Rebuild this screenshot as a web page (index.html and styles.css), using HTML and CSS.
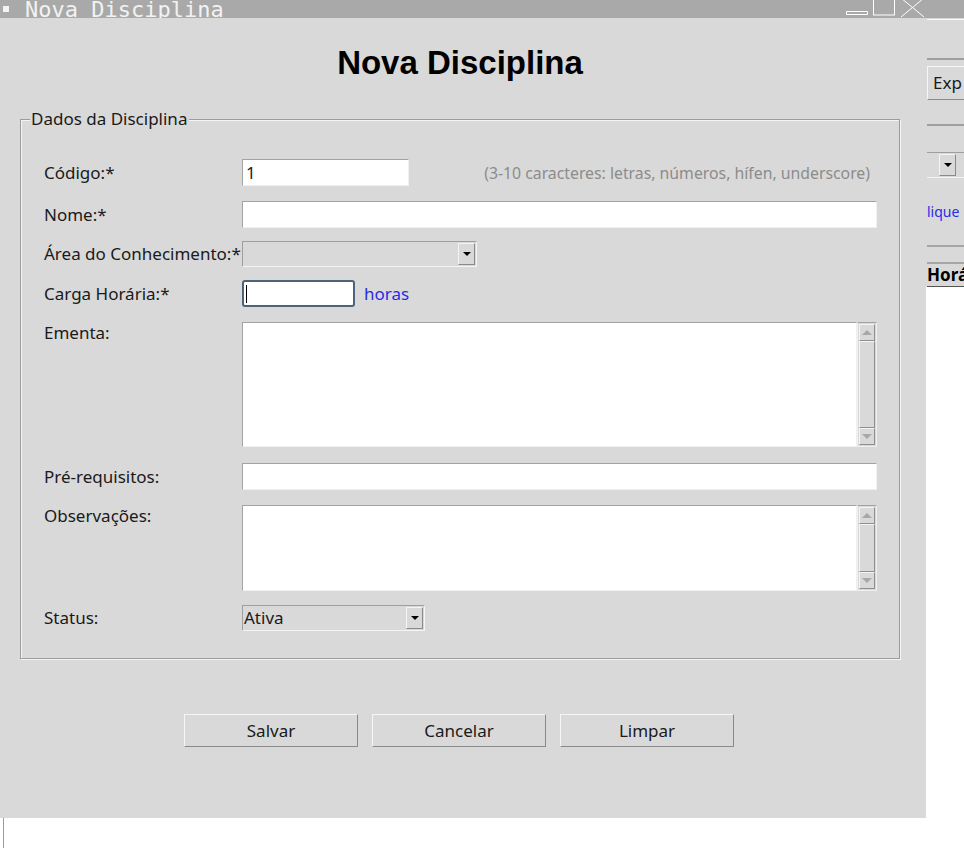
FILE: index.html
```html
<!DOCTYPE html>
<html lang="pt">
<head>
<meta charset="utf-8">
<title>Nova Disciplina</title>
<link rel="stylesheet" href="styles.css">
</head>
<body>
<div class="screen">
  <div class="titlebar">
    <span class="tb-icon"></span>
    <span class="tb-title">Nova Disciplina</span>
    <span class="tb-controls">
      <svg width="80" height="18" viewBox="0 0 80 18">
        <path d="M0.5 14.5h21v-3h-21z" fill="none" stroke="#fff" stroke-width="1"/>
        <rect x="27.5" y="-2" width="21" height="17" fill="none" stroke="#fff"/>
        <path d="M55 -2L78 17M78 -2L55 17" stroke="#fff" stroke-width="1"/>
      </svg>
    </span>
  </div>
  <div class="desk">
    <div class="win">
      <h1 class="heading">Nova Disciplina</h1>
      <div class="group">
        <div class="legend">Dados da Disciplina</div>
        <div class="rows">
          <div class="row">
            <label class="lbl">Código:*</label>
            <div class="entry w-cod">1</div>
            <span class="hint">(3-10 caracteres: letras, números, hífen, underscore)</span>
          </div>
          <div class="row sp15">
            <label class="lbl">Nome:*</label>
            <div class="entry w-full"></div>
          </div>
          <div class="row sp13">
            <label class="lbl">Área do Conhecimento:*</label>
            <div class="combo w-area"><span class="combo-val"></span><span class="arrow"><span class="tri"></span></span></div>
          </div>
          <div class="row sp13">
            <label class="lbl">Carga Horária:*</label>
            <div class="entry focus w-carga"><span class="caret"></span></div>
            <span class="unit">horas</span>
          </div>
          <div class="row top sp15">
            <label class="lbl lbl-top">Ementa:</label>
            <div class="textbox h-ementa">
              <div class="text-area"></div>
              <div class="sbar"><span class="sbtn"><span class="stri up"></span></span><span class="strough"><span class="thumb"></span></span><span class="sbtn"><span class="stri down"></span></span></div>
            </div>
          </div>
          <div class="row sp16">
            <label class="lbl">Pré-requisitos:</label>
            <div class="entry w-full"></div>
          </div>
          <div class="row top sp15">
            <label class="lbl lbl-top">Observações:</label>
            <div class="textbox h-obs">
              <div class="text-area"></div>
              <div class="sbar"><span class="sbtn"><span class="stri up"></span></span><span class="strough"><span class="thumb"></span></span><span class="sbtn"><span class="stri down"></span></span></div>
            </div>
          </div>
          <div class="row sp14">
            <label class="lbl">Status:</label>
            <div class="combo w-status"><span class="combo-val">Ativa</span><span class="arrow"><span class="tri"></span></span></div>
          </div>
        </div>
      </div>
      <div class="buttons">
        <button class="btn">Salvar</button>
        <button class="btn">Cancelar</button>
        <button class="btn">Limpar</button>
      </div>
    </div>
    <div class="back">
      <div class="bk-top"></div>
      <div class="bk-sep"></div>
      <div class="bk-btn">Exp</div>
      <div class="bk-sep2"></div>
      <div class="bk-combo"><span class="bk-cval"></span><span class="arrow"><span class="tri"></span></span></div>
      <div class="bk-link">lique</div>
      <div class="bk-sep3"></div>
      <div class="bk-head">Horá</div>
      <div class="bk-white"></div>
    </div>
  </div>
  <div class="below"><span class="below-line"></span></div>
</div>
</body>
</html>
```
FILE: styles.css
```css
html, body {
  margin: 0;
  padding: 0;
  background: #ffffff;
}
.screen {
  width: 964px;
  height: 848px;
  overflow: hidden;
  font-family: "Noto Sans", sans-serif;
  font-size: 17px;
  color: #1a1a1a;
}
.titlebar {
  height: 18px;
  background: #a9a9a9;
  display: flex;
  align-items: flex-end;
  position: relative;
  overflow: hidden;
}
.tb-icon {
  width: 6px;
  height: 6px;
  background: #f4f4f4;
  margin: 0 0 6px 3px;
  flex: none;
}
.tb-title {
  font-family: "DejaVu Sans Mono", monospace;
  font-size: 22px;
  line-height: 22px;
  color: #f2f2f2;
  margin-left: 16px;
  transform: translateY(3px);
}
.tb-controls {
  margin-left: auto;
  margin-right: 39px;
  height: 18px;
}
.tb-controls svg { display: block; transform: translateX(1px); }

.desk {
  display: flex;
  height: 800px;
}
.win {
  width: 926px;
  flex: none;
  background: #d9d9d9;
  display: flex;
  flex-direction: column;
}
.heading {
  margin: 0;
  padding-top: 26px;
  height: 74px;
  box-sizing: border-box;
  text-align: center;
  font-family: "Liberation Sans", Arial, sans-serif;
  font-weight: bold;
  font-size: 33px;
  line-height: 38px;
  color: #000;
  padding-right: 6px;
}
.group {
  margin: 27px 26px 0 20px;
  border: 1px solid #9c9c9c;
  box-shadow: inset 1px 1px 0 #f4f4f4, 1px 1px 0 #f4f4f4;
  height: 540px;
  box-sizing: border-box;
  position: relative;
  padding: 39px 21px 0 23px;
}
.legend {
  position: absolute;
  top: -12px;
  left: 9px;
  background: #d9d9d9;
  padding: 0 2px 0 1px;
  font-size: 17px;
  line-height: 22px;
  color: #1a1a1a;
}
.rows {
  display: flex;
  flex-direction: column;
}
.row {
  display: flex;
  align-items: center;
}
.row.top { align-items: flex-start; }
.sp13 { margin-top: 13px; }
.sp14 { margin-top: 14px; }
.sp15 { margin-top: 15px; }
.sp16 { margin-top: 16px; }
.lbl {
  width: 198px;
  flex: none;
  font-size: 17px;
  line-height: 22px;
  white-space: nowrap;
  overflow: visible;
}
.lbl-top { padding-top: 0; }

.entry {
  height: 27px;
  box-sizing: border-box;
  background: #fff;
  border-top: 1px solid #a3a3a3;
  border-left: 1px solid #a3a3a3;
  border-right: 1px solid #f0f0f0;
  border-bottom: 1px solid #f0f0f0;
  font-size: 17px;
  line-height: 25px;
  padding-left: 3px;
  flex: none;
}
.w-cod { width: 167px; }
.w-full { width: 635px; }
.w-carga { width: 113px; }
.entry.focus {
  border: 2px solid #4f6378;
  border-radius: 3px;
  padding-left: 2px;
  display: flex;
  align-items: center;
}
.caret {
  width: 1px;
  height: 18px;
  background: #000;
}
.hint {
  margin-left: auto;
  margin-right: 8px;
  color: #8c8c8c;
  font-size: 15.8px;
}
.unit {
  margin-left: 9px;
  color: #2a2ae8;
  font-size: 17px;
}
.combo {
  height: 26px;
  box-sizing: border-box;
  display: flex;
  align-items: stretch;
  background: #d9d9d9;
  border-top: 1px solid #9f9f9f;
  border-left: 1px solid #9f9f9f;
  border-right: 1px solid #f4f4f4;
  border-bottom: 1px solid #f4f4f4;
  flex: none;
}
.w-area { width: 235px; }
.w-status { width: 183px; }
.combo-val {
  flex: 1;
  font-size: 17px;
  line-height: 24px;
  padding-left: 1px;
}
.arrow {
  width: 17px;
  margin: 1px 1px 1px 0;
  box-sizing: border-box;
  border-top: 1px solid #f4f4f4;
  border-left: 1px solid #f4f4f4;
  border-right: 1px solid #8a8a8a;
  border-bottom: 1px solid #8a8a8a;
  display: flex;
  align-items: center;
  justify-content: center;
  background: #d9d9d9;
}
.tri {
  width: 0;
  height: 0;
  border-left: 4px solid transparent;
  border-right: 4px solid transparent;
  border-top: 4px solid #000;
}
.textbox {
  display: flex;
  width: 635px;
}
.h-ementa { height: 125px; }
.h-obs { height: 86px; }
.text-area {
  width: 615px;
  background: #fff;
  box-sizing: border-box;
  border-top: 1px solid #a3a3a3;
  border-left: 1px solid #a3a3a3;
  border-right: 1px solid #f0f0f0;
  border-bottom: 1px solid #f0f0f0;
}
.sbar {
  width: 20px;
  box-sizing: border-box;
  background: #d9d9d9;
  border: 1px solid #f0f0f0;
  border-top-color: #a3a3a3;
  display: flex;
  flex-direction: column;
  padding: 1px;
}
.sbtn {
  height: 17px;
  flex: none;
  box-sizing: border-box;
  border-top: 1px solid #f4f4f4;
  border-left: 1px solid #f4f4f4;
  border-right: 1px solid #8f8f8f;
  border-bottom: 1px solid #8f8f8f;
  display: flex;
  align-items: center;
  justify-content: center;
}
.strough {
  flex: 1;
  display: flex;
}
.thumb {
  flex: 1;
  box-sizing: border-box;
  border-top: 1px solid #f4f4f4;
  border-left: 1px solid #f4f4f4;
  border-right: 1px solid #8f8f8f;
  border-bottom: 1px solid #8f8f8f;
}
.stri {
  width: 0;
  height: 0;
  border-left: 5px solid transparent;
  border-right: 5px solid transparent;
}
.stri.up { border-bottom: 5px solid #a8a8a8; }
.stri.down { border-top: 5px solid #a8a8a8; }

.buttons {
  display: flex;
  justify-content: center;
  gap: 14px;
  margin-top: 55px;
  padding-right: 8px;
}
.btn {
  width: 174px;
  height: 33px;
  background: #d9d9d9;
  border: none;
  border-top: 1px solid #f6f6f6;
  border-left: 1px solid #f6f6f6;
  border-right: 1px solid #8a8a8a;
  border-bottom: 1px solid #8a8a8a;
  font-family: "Noto Sans", sans-serif;
  font-size: 17px;
  color: #1a1a1a;
  padding: 0;
}

.back {
  flex: 1;
  background: #d9d9d9;
  display: flex;
  flex-direction: column;
  overflow: hidden;
  padding-left: 1px;
}
.bk-top {
  height: 1px;
  margin-top: 1px;
  background: #f8f8f8;
}
.bk-sep {
  height: 2px;
  margin-top: 38px;
  background: #9e9e9e;
}
.bk-btn {
  margin-top: 6px;
  height: 34px;
  width: 60px;
  box-sizing: border-box;
  border-top: 1px solid #f6f6f6;
  border-left: 1px solid #f6f6f6;
  border-bottom: 1px solid #8a8a8a;
  font-size: 17px;
  line-height: 32px;
  padding-left: 5px;
}
.bk-sep2 {
  height: 2px;
  margin-top: 24px;
  background: #a0a0a0;
}
.bk-combo {
  margin-top: 26px;
  height: 26px;
  width: 40px;
  box-sizing: border-box;
  display: flex;
  border-top: 1px solid #9f9f9f;
  border-bottom: 1px solid #f4f4f4;
}
.bk-cval { width: 12px; background: #d9d9d9; }
.bk-combo .arrow { width: 17px; margin: 1px 0; }
.bk-link {
  margin-top: 24px;
  color: #2a2ae8;
  font-size: 14px;
  line-height: 20px;
  white-space: nowrap;
}
.bk-sep3 {
  margin-top: 23px;
  height: 19px;
  box-sizing: border-box;
  border-top: 2px solid #a6a6a6;
  border-bottom: 2px solid #a6a6a6;
}
.bk-head {
  height: 22px;
  font-weight: bold;
  font-size: 17px;
  line-height: 22px;
  white-space: nowrap;
  border-bottom: 1px solid #555;
  color: #000;
}
.bk-white {
  flex: 1;
  background: #fff;
  margin-left: -1px;
}
.below {
  height: 30px;
  background: #fff;
  padding-left: 3px;
}
.below-line {
  display: block;
  width: 1px;
  height: 30px;
  background: #9a9a9a;
}
```
